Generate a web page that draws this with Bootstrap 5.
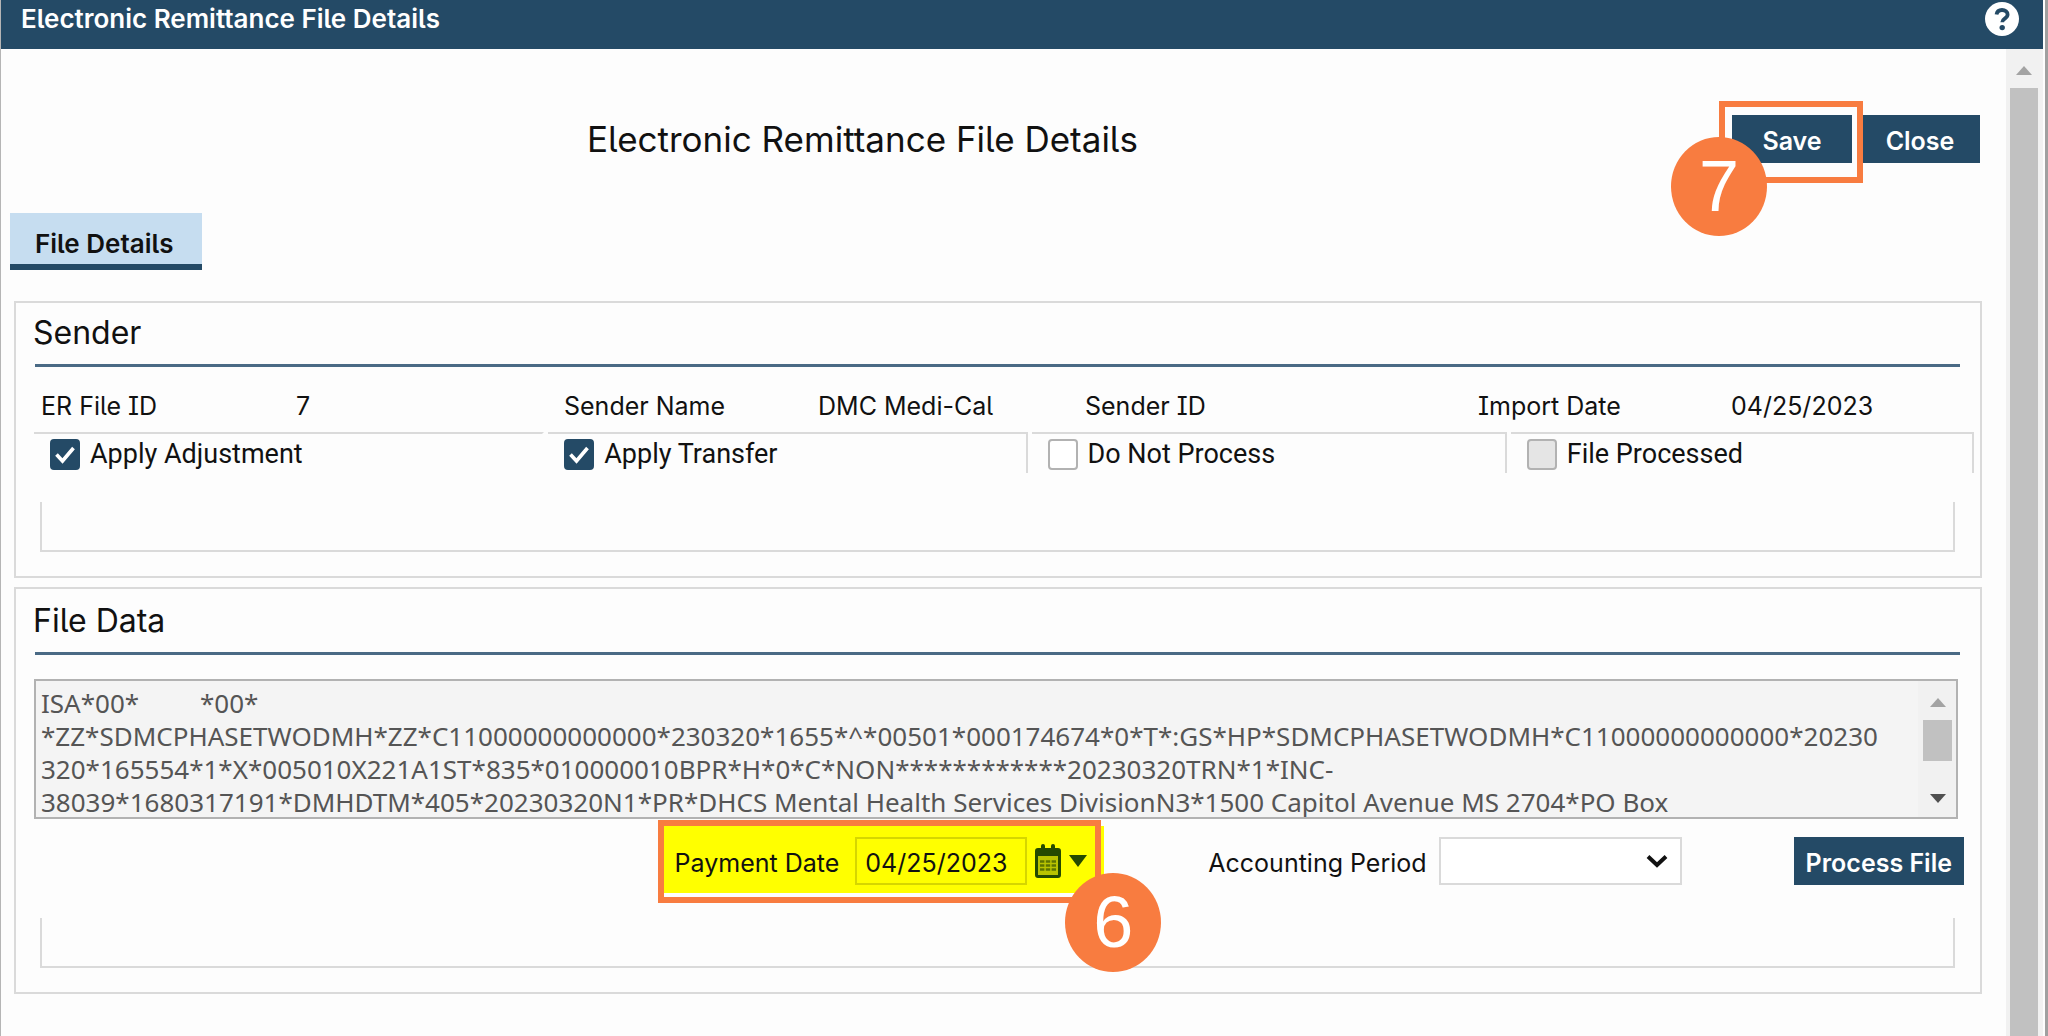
<!DOCTYPE html>
<html lang="en">
<head>
<meta charset="utf-8">
<meta name="viewport" content="width=device-width, initial-scale=1">
<title>Electronic Remittance File Details</title>
<link href="https://cdn.jsdelivr.net/npm/bootstrap@5.3.0/dist/css/bootstrap.min.css" rel="stylesheet">
<style>
  :root { --navy: #244a66; --line: #dadada; --callout: #f87c40; }
  body { font-family: Inter, "Liberation Sans", sans-serif; font-size: 25px; line-height: 32px; color: #111; background: #fdfdfd; font-feature-settings: "calt" 0, "cv05", "cv08"; }
  .window-frame { height: 100vh; border-left: 1px solid #b5b5b5; border-right: 3px solid #a0a0a0; padding-right: 2px; }
  .title-bar { background: var(--navy); height: 49px; padding: 1px 24px 13px 20px; color: #fff; }
  .title-bar h1 { font-size: 26px; line-height: 34px; font-weight: 600; }
  .help-btn { background: none; border: 0; padding: 0; line-height: 0; }
  .page-head { padding: 66px 26px 0 0; }
  .page-title { font-size: 35px; line-height: 48px; font-weight: 400; }
  .btn-navy { --bs-btn-color: #fff; --bs-btn-bg: var(--navy); --bs-btn-hover-color: #fff; --bs-btn-hover-bg: #1b3a51; --bs-btn-border-width: 0; --bs-btn-border-radius: 0;
    --bs-btn-font-size: 25px; --bs-btn-font-weight: 600; --bs-btn-line-height: 32px; --bs-btn-padding-x: 12px; padding-top: 10px; padding-bottom: 6px; }
  .btn-head { width: 120px; }
  .tab-row { margin: 50px 0 31px 9px; }
  .tab-row .nav-link { background: #c6ddf0; color: #111; font-size: 26px; line-height: 34px; font-weight: 600; padding: 14px 28px 3px 25px; border-bottom: 6px solid var(--navy); }
  .panel { border: 2px solid var(--line); margin: 0 24px 9px 13px; padding: 10px 0 24px; }
  .panel h3 { font-size: 32px; line-height: 40px; font-weight: 400; margin: 0 0 11px 17px; }
  .panel.data-panel { padding-top: 12px; }
  .rule { height: 3px; background: #4a6a85; margin: 0 20px 0 19px; }
  .field-grid { display: grid; grid-template-columns: 255fr 268fr 254fr 267fr 393fr 253fr 243fr; padding: 13px 6px 0 25px; line-height: 52px; }
  .check-row { display: grid; grid-template-columns: 510fr 479fr 475fr 463fr; padding: 0 6px 0 18px; gap: 4px; }
  .check-cell { border-top: 2px solid var(--line); border-right: 2px solid var(--line); height: 41px; padding: 1px 0 0 16px; gap: 10px; font-family: Roboto, sans-serif; font-size: 27px; }
  .check-cell.first { border-right-color: transparent; }
  .check-cell .form-check-input { width: 30px; height: 31px; margin: 0; border: 2px solid #b2b2b2; border-radius: 4px; opacity: 1; flex: none; }
  .check-cell .form-check-input:checked { background-color: var(--navy); border-color: var(--navy);
    background-image: url("data:image/svg+xml,%3csvg xmlns='http://www.w3.org/2000/svg' viewBox='0 0 26 27'%3e%3cpath d='M4.500 13.500l6 6.500L21.500 7' fill='none' stroke='white' stroke-width='3.600'/%3e%3c/svg%3e"); }
  .check-cell .form-check-input:disabled { background-color: #e5e5e5; }
  .check-cell label { opacity: 1 !important; }
  .open-box { border: 2px solid var(--line); border-top: 0; height: 50px; margin: 29px 25px 0 24px; }
  .raw-data { border: 2px solid #b2b2b2; background: #f4f4f4; margin: 24px 22px 0 18px; height: 140px; }
  .raw-data textarea { border: 0; background: transparent; resize: none; overflow: hidden; white-space: pre; padding: 6px 0 0 5px; font-family: "Noto Sans", sans-serif; font-size: 26px; line-height: 33px; color: #555; display: block; }
  .inner-scroll { width: 38px; padding: 17px 4px 14px 5px; background: #f1f1f1; }
  .inner-thumb { height: 41px; background: #c1c1c1; margin: 13px 0 auto; }
  .action-row { margin: 18px 16px 0 0; gap: 112px; }
  .pay-group { position: relative; background: #ff0; margin: -11px -8px 0 0; padding: 11px 17px 8px 11px; }
  .pay-group .form-control { width: 172px; height: 48px; border: 2px solid #d6d600; background: transparent; border-radius: 0; font-size: 25px; line-height: 32px; padding: 8px 0 4px 8px; color: #111; }
  .date-btn { background: none; border: 0; padding: 0; line-height: 0; }
  .callout-box { position: absolute; border: 6px solid var(--callout); pointer-events: none; }
  .callout-num { position: absolute; width: 96px; height: 99px; border-radius: 50%; background: var(--callout); color: #fff; font: 72px/99px "Liberation Sans", sans-serif; text-align: center; z-index: 3; pointer-events: none; }
  .box-save { inset: -14px -11px -20px -13px; }
  .num-save { left: -61px; top: 22px; }
  .box-pay { inset: -6px 3px -10px -6px; }
  .num-pay { right: -57px; top: 47px; }
  .acct-select { width: 243px; height: 48px; border: 2px solid var(--line); border-radius: 0; font-size: 25px; padding: 0 40px 0 8px;
    background: #fff url("data:image/svg+xml,%3csvg xmlns='http://www.w3.org/2000/svg' viewBox='0 0 22 14'%3e%3cpath d='M2 2.500l9 8.500 9-8.500' fill='none' stroke='%23111' stroke-width='4'/%3e%3c/svg%3e") no-repeat right 12px center / 22px 14px; }
  .acct-label { padding-right: 12px; }
  .data-panel .open-box { margin-top: 25px; }
  .action-row label { padding-top: 10px; padding-bottom: 6px; }
  .page-scroll { width: 37px; background: #f1f1f1; padding: 17px 5px 0 4px; }
  .page-thumb { background: #c1c1c1; margin-top: 13px; }
</style>
</head>
<body>
<div class="window-frame d-flex flex-column overflow-hidden">
  <header class="title-bar d-flex justify-content-between align-items-center flex-shrink-0">
    <h1 class="m-0">Electronic Remittance File Details</h1>
    <button class="help-btn" type="button" aria-label="Help">
      <svg width="34" height="34" viewBox="0 0 34 34"><circle cx="17" cy="17" r="17" fill="#fff"/><path d="M11.500 12.500C12 9.500 14 8 17 8c3.200 0 5.600 1.800 5.600 4.600 0 4.200-5.400 3.900-5.400 7.600" fill="none" stroke="#244a66" stroke-width="3.800"/><circle cx="17.200" cy="25.600" r="2.700" fill="#244a66"/></svg>
    </button>
  </header>
  <div class="d-flex flex-grow-1 overflow-hidden">
    <main class="flex-grow-1 overflow-hidden">
      <div class="page-head d-flex align-items-center">
        <h2 class="page-title flex-grow-1 text-center m-0 pe-2">Electronic Remittance File Details</h2>
        <div class="d-flex gap-2">
          <div class="position-relative z-1">
            <button class="btn btn-navy btn-head" type="button">Save</button>
            <span class="callout-box box-save"></span>
            <span class="callout-num num-save">7</span>
          </div>
          <button class="btn btn-navy btn-head" type="button">Close</button>
        </div>
      </div>
      <nav class="nav tab-row"><a class="nav-link active" href="#details">File Details</a></nav>

      <section class="panel" id="details">
        <h3>Sender</h3>
        <div class="rule"></div>
        <div class="field-grid">
          <span>ER File ID</span><span>7</span>
          <span>Sender Name</span><span>DMC Medi-Cal</span>
          <span>Sender ID</span>
          <span>Import Date</span><span>04/25/2023</span>
        </div>
        <div class="check-row">
          <div class="check-cell first d-flex align-items-center"><input class="form-check-input" type="checkbox" id="adj" checked><label for="adj">Apply Adjustment</label></div>
          <div class="check-cell d-flex align-items-center"><input class="form-check-input" type="checkbox" id="trf" checked><label for="trf">Apply Transfer</label></div>
          <div class="check-cell d-flex align-items-center"><input class="form-check-input" type="checkbox" id="dnp"><label for="dnp">Do Not Process</label></div>
          <div class="check-cell d-flex align-items-center"><input class="form-check-input" type="checkbox" id="fpr" disabled><label for="fpr">File Processed</label></div>
        </div>
        <div class="open-box"></div>
      </section>

      <section class="panel data-panel">
        <h3>File Data</h3>
        <div class="rule"></div>
        <div class="raw-data d-flex">
          <textarea class="flex-grow-1" readonly aria-label="File Data">ISA*00*         *00*
*ZZ*SDMCPHASETWODMH*ZZ*C11000000000000*230320*1655*^*00501*000174674*0*T*:GS*HP*SDMCPHASETWODMH*C11000000000000*20230
320*165554*1*X*005010X221A1ST*835*010000010BPR*H*0*C*NON************20230320TRN*1*INC-
38039*1680317191*DMHDTM*405*20230320N1*PR*DHCS Mental Health Services DivisionN3*1500 Capitol Avenue MS 2704*PO Box</textarea>
          <div class="inner-scroll d-flex flex-column align-items-stretch">
            <svg class="mx-auto" width="16" height="9" viewBox="0 0 16 9"><path d="M8 0l8 9H0z" fill="#a3a3a3"/></svg>
            <div class="inner-thumb"></div>
            <svg class="mx-auto" width="16" height="9" viewBox="0 0 16 9"><path d="M8 9l8-9H0z" fill="#505050"/></svg>
          </div>
        </div>
        <div class="action-row d-flex justify-content-end align-items-start">
          <div class="pay-group d-flex align-items-center">
            <label for="pay" class="pe-3">Payment Date</label>
            <input class="form-control" id="pay" type="text" value="04/25/2023">
            <button class="date-btn d-flex align-items-center gap-2 ps-2" type="button" aria-label="Open calendar">
              <svg width="26" height="34" viewBox="0 0 26 34"><path d="M3 4h3V2a2 2 0 0 1 4 0v2h6V2a2 2 0 0 1 4 0v2h3a3 3 0 0 1 3 3v24a3 3 0 0 1-3 3H3a3 3 0 0 1-3-3V7a3 3 0 0 1 3-3zM3 12v19h20V12z" fill="#254a00" fill-rule="evenodd"/><path d="M3 12h20v19H3z" fill="#b9c400"/><path d="M5 17.500h16M5 21.500h16M5 25.500h16" stroke="#5d7500" stroke-width="2.600" stroke-dasharray="4.400 1.400"/></svg>
              <svg width="18" height="12" viewBox="0 0 18 12"><path d="M0 0h18L9 12z" fill="#254a00"/></svg>
            </button>
            <span class="callout-box box-pay"></span>
            <span class="callout-num num-pay">6</span>
          </div>
          <div class="d-flex align-items-center">
            <label for="acct" class="acct-label">Accounting Period</label>
            <select class="form-select acct-select" id="acct"><option value=""></option></select>
          </div>
          <button class="btn btn-navy" type="button">Process File</button>
        </div>
        <div class="open-box"></div>
      </section>
    </main>
    <div class="page-scroll d-flex flex-column flex-shrink-0">
      <svg class="mx-auto flex-shrink-0" width="16" height="9" viewBox="0 0 16 9"><path d="M8 0l8 9H0z" fill="#a3a3a3"/></svg>
      <div class="page-thumb flex-grow-1"></div>
    </div>
  </div>
</div>
<script src="https://cdn.jsdelivr.net/npm/bootstrap@5.3.0/dist/js/bootstrap.bundle.min.js"></script>
</body>
</html>
